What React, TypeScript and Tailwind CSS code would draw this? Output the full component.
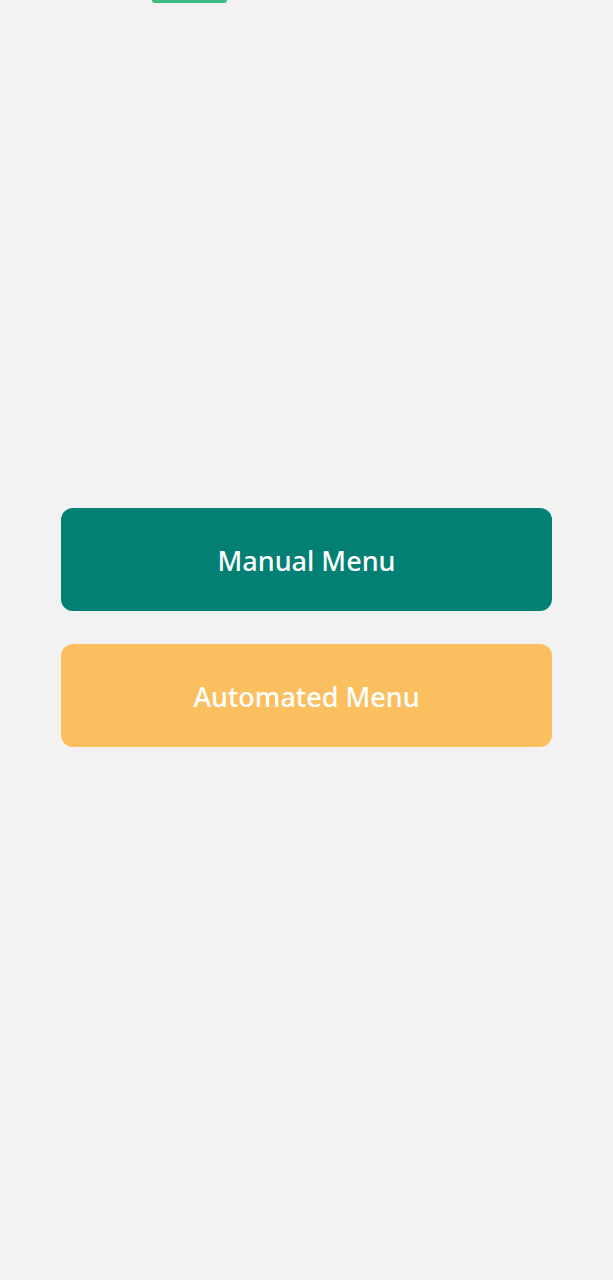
export default function App() {
  return (
    <div className="min-h-[1280px] w-full bg-[#f2f2f2] flex flex-col" style={{ fontFamily: '"Noto Sans", sans-serif' }}>
      {/* top indicator */}
      <div className="ml-[152px] h-[3px] w-[75px] rounded-b-full bg-[#3fba80]" />

      {/* Menu buttons */}
      <div className="mt-[505px] px-[61px] flex flex-col gap-[33px]">
        <button className="h-[103px] w-full pt-[3px] rounded-[12px] bg-[#018073] text-white text-[27px] font-medium">
          Manual Menu
        </button>
        <button className="h-[103px] w-full pt-[3px] rounded-[12px] bg-[#fbbf5f] text-white text-[27px] font-medium">
          Automated Menu
        </button>
      </div>
    </div>
  );
}
